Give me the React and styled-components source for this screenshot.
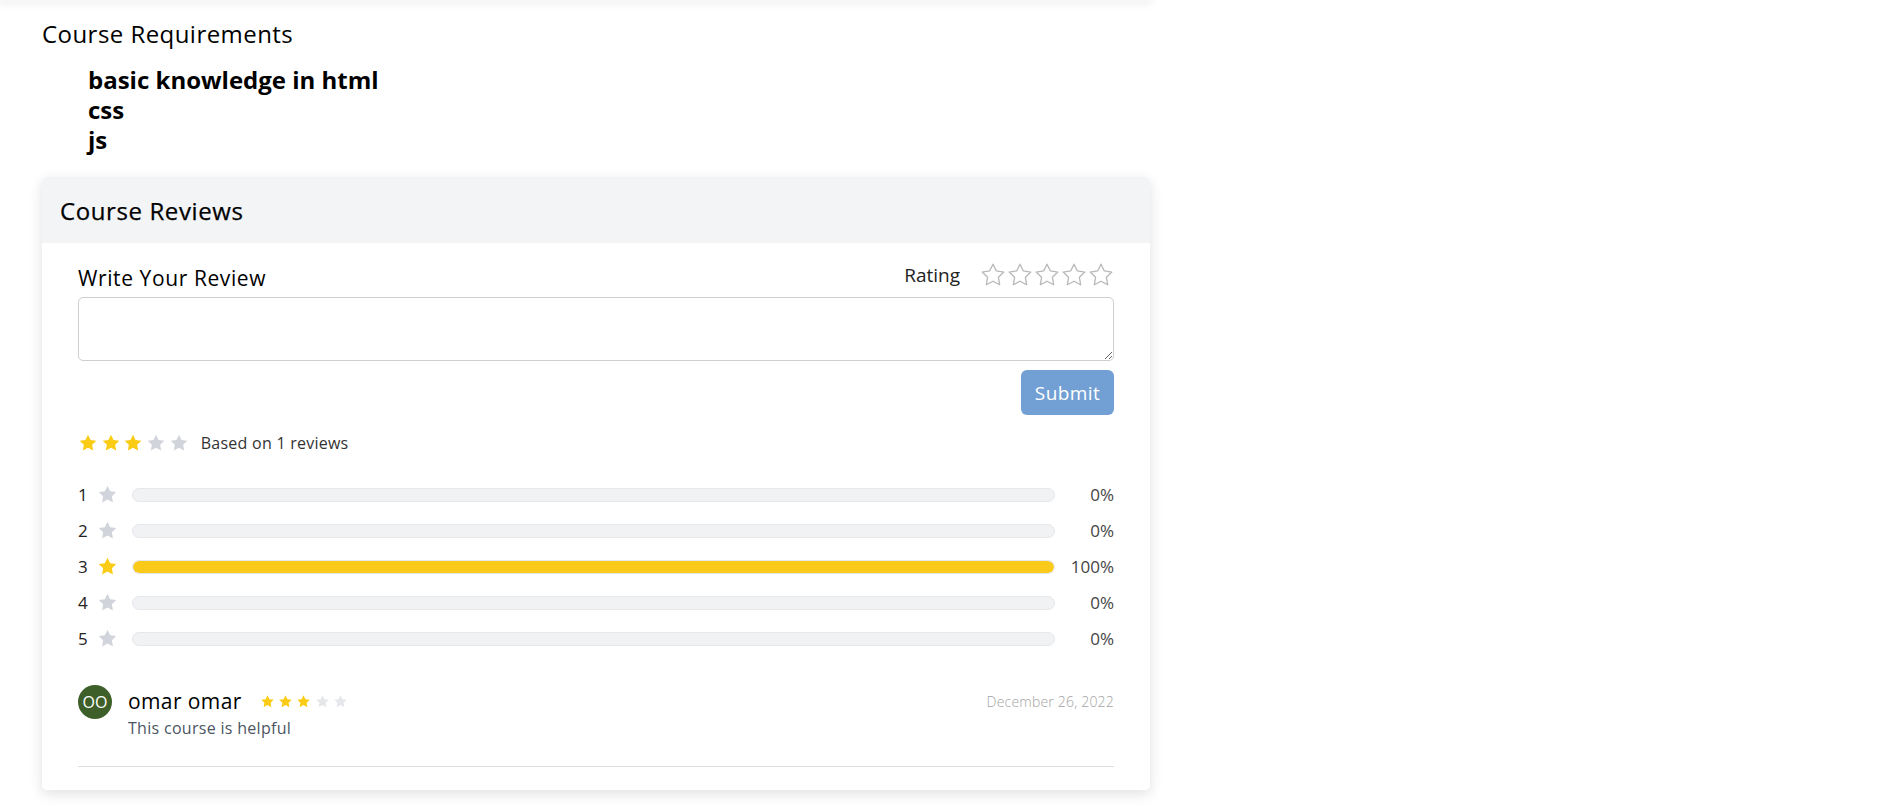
import React from "react";
import styled, { createGlobalStyle } from "styled-components";

const GlobalStyle = createGlobalStyle`
  * { box-sizing: border-box; }
  body {
    margin: 0;
    background: #fff;
    font-family: "Open Sans", "Liberation Sans", sans-serif;
    color: #000;
  }
`;

const STAR_PATH =
  "M12 2l3.09 6.26L22 9.27l-5 4.87 1.18 6.88L12 17.77l-6.18 3.25L7 14.14 2 9.27l6.91-1.01L12 2z";

const Page = styled.div`
  width: 1150px;
  padding: 0 0 20px 42px;
`;

/* shadow left from the card scrolled above */
const PrevCardEdge = styled.div`
  width: 1150px;
  height: 0;
  box-shadow: 0 1px 8px 2px rgba(0, 0, 0, 0.1);
`;

const SectionTitle = styled.h3`
  margin: 0;
  padding-top: 18px;
  font-size: 24px;
  font-weight: 500;
  line-height: 32px;
  letter-spacing: 0.45px;
`;

const ReqList = styled.ul`
  list-style: none;
  margin: 15px 0 0;
  padding: 0 0 0 46px;
`;

const ReqItem = styled.li`
  font-size: 24px;
  font-weight: 700;
  line-height: 30px;
`;

const Card = styled.section`
  margin-top: 22px;
  width: 1108px;
  border-radius: 5px;
  background: #fff;
  box-shadow: 0 4px 14px rgba(0, 0, 0, 0.12);
  overflow: hidden;
`;

const CardHeader = styled.div`
  height: 66px;
  background: #f3f4f6;
  display: flex;
  align-items: center;
  padding: 0 18px;
  font-size: 24px;
  font-weight: 500;
  letter-spacing: 0.6px;
  -webkit-text-stroke: 0.25px #000;
`;

const CardBody = styled.div`
  padding: 16px 36px 23px;
`;

const FormHead = styled.div`
  display: flex;
  align-items: center;
  justify-content: space-between;
  height: 32px;
`;

const FormLabel = styled.label`
  font-size: 21px;
  letter-spacing: 0.6px;
  padding-top: 6px;
`;

const RatingPicker = styled.div`
  display: flex;
  align-items: center;
  gap: 20px;
  font-size: 19px;
  color: #222;
`;

const StarRow = styled.div`
  display: flex;
  align-items: center;
  gap: ${(p) => p.gap || 0}px;
`;

const TextArea = styled.textarea`
  display: block;
  width: 100%;
  height: 64px;
  margin-top: 6px;
  border: 1px solid #cfcfcf;
  border-radius: 5px;
  resize: vertical;
  font: inherit;
  outline: none;
`;

const SubmitRow = styled.div`
  display: flex;
  justify-content: flex-end;
  margin-top: 9px;
`;

const SubmitButton = styled.button`
  width: 93px;
  height: 45px;
  border: 0;
  border-radius: 6px;
  background: #73a0d4;
  color: #fff;
  font-family: inherit;
  font-size: 19px;
  letter-spacing: 0.4px;
`;

const Summary = styled.div`
  display: flex;
  align-items: center;
  gap: 12px;
  height: 22px;
  margin-top: 17px;
  font-size: 16px;
  color: #333;
  letter-spacing: 0.25px;
`;

const Bars = styled.div`
  margin-top: 29px;
  display: flex;
  flex-direction: column;
  gap: 22px;
`;

const BarRow = styled.div`
  display: grid;
  grid-template-columns: 19px 21px 1fr 59px;
  align-items: center;
  height: 14px;
  font-size: 17px;
  color: #222;
`;

const BarTrack = styled.div`
  margin-left: 14px;
  height: 14px;
  border-radius: 7px;
  background: #f1f2f4;
  border: 1px solid #e6e7ea;
  overflow: hidden;
`;

const BarFill = styled.div`
  height: 100%;
  background: #f9ca1a;
  border-radius: 7px;
`;

const Percent = styled.span`
  text-align: right;
  color: #444;
`;

const Review = styled.div`
  display: flex;
  align-items: flex-start;
  margin-top: 44px;
  padding-bottom: 28px;
  border-bottom: 1px solid #dedede;
`;

const Avatar = styled.div`
  width: 34px;
  height: 34px;
  border-radius: 50%;
  background: #3e5f29;
  color: #fff;
  font-size: 16px;
  display: flex;
  align-items: center;
  justify-content: center;
  flex-shrink: 0;
`;

const ReviewMain = styled.div`
  flex: 1;
  margin-left: 16px;
`;

const ReviewHead = styled.div`
  display: flex;
  align-items: center;
  height: 32px;
`;

const ReviewName = styled.span`
  font-size: 21px;
  letter-spacing: 0.4px;
  margin-right: 18px;
`;

const ReviewDate = styled.span`
  margin-left: auto;
  font-size: 14px;
  font-weight: 300;
  letter-spacing: 0.2px;
  color: #a3a3a3;
`;

const ReviewText = styled.p`
  margin: 1px 0 0;
  font-size: 16px;
  color: #4b5563;
  letter-spacing: 0.3px;
  line-height: 20px;
`;

function Star({ size, filled, color, outline }) {
  return (
    <svg width={size} height={size} viewBox="0 0 24 24" style={{ display: "block" }}>
      <path
        d={STAR_PATH}
        fill={outline ? "none" : filled ? "#facc15" : color || "#d1d5db"}
        stroke={outline ? "#b8b8b8" : "none"}
        strokeWidth={outline ? 1.2 : 0}
        strokeLinejoin="round"
      />
    </svg>
  );
}

function Stars({ count, value, size, gap, empty, outline }) {
  return (
    <StarRow gap={gap}>
      {Array.from({ length: count }).map((_, i) => (
        <Star key={i} size={size} filled={i < value} color={empty} outline={outline} />
      ))}
    </StarRow>
  );
}

const breakdown = [
  { stars: 1, pct: 0 },
  { stars: 2, pct: 0 },
  { stars: 3, pct: 100 },
  { stars: 4, pct: 0 },
  { stars: 5, pct: 0 },
];

export default function App() {
  return (
    <>
      <GlobalStyle />
      <PrevCardEdge />
      <Page>
        <SectionTitle>Course Requirements</SectionTitle>
        <ReqList>
          <ReqItem>basic knowledge in html</ReqItem>
          <ReqItem>css</ReqItem>
          <ReqItem>js</ReqItem>
        </ReqList>

        <Card>
          <CardHeader>Course Reviews</CardHeader>
          <CardBody>
            <FormHead>
              <FormLabel>Write Your Review</FormLabel>
              <RatingPicker>
                <span>Rating</span>
                <Stars count={5} value={0} size={26} gap={1} outline />
              </RatingPicker>
            </FormHead>
            <TextArea />
            <SubmitRow>
              <SubmitButton>Submit</SubmitButton>
            </SubmitRow>

            <Summary>
              <Stars count={5} value={3} size={20} gap={2.7} />
              <span>Based on 1 reviews</span>
            </Summary>

            <Bars>
              {breakdown.map((b) => (
                <BarRow key={b.stars}>
                  <span>{b.stars}</span>
                  <Star size={21} filled={b.stars === 3} />
                  <BarTrack>
                    {b.pct > 0 && <BarFill style={{ width: `${b.pct}%` }} />}
                  </BarTrack>
                  <Percent>{b.pct}%</Percent>
                </BarRow>
              ))}
            </Bars>

            <Review>
              <Avatar>OO</Avatar>
              <ReviewMain>
                <ReviewHead>
                  <ReviewName>omar omar</ReviewName>
                  <Stars count={5} value={3} size={15} gap={3.3} empty="#e5e7eb" />
                  <ReviewDate>December 26, 2022</ReviewDate>
                </ReviewHead>
                <ReviewText>This course is helpful</ReviewText>
              </ReviewMain>
            </Review>
          </CardBody>
        </Card>
      </Page>
    </>
  );
}
